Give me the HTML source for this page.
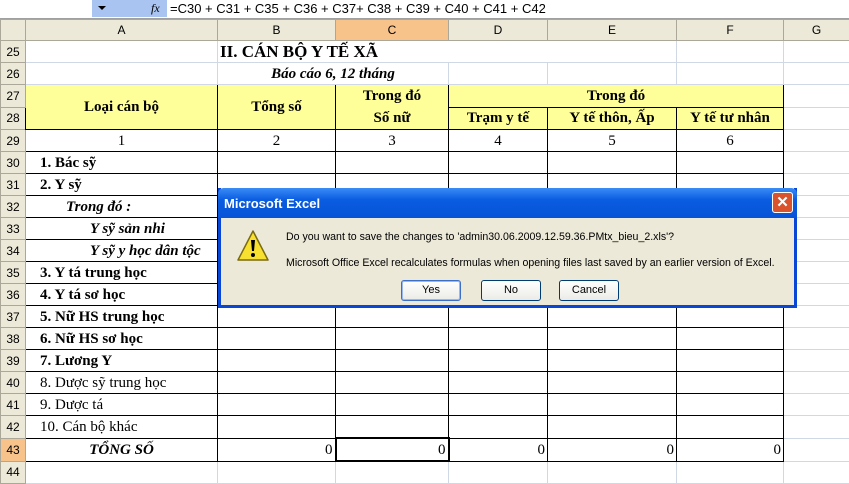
<!DOCTYPE html>
<html><head><meta charset="utf-8"><style>
body{margin:0;width:849px;height:482px;overflow:hidden;background:#fff;position:relative;font-family:"Liberation Serif",serif}
#fb{position:absolute;left:0;top:0;width:849px;height:18px;background:#fff;border-bottom:1px solid #a0a0a0}
#nb{position:absolute;left:0;top:0;width:92px;height:17px;background:#fff}
#nbd{position:absolute;left:92px;top:0;width:75px;height:17px;background:#a9c4f0}
#fx{position:absolute;left:170px;top:1px;font:13px "Liberation Sans",sans-serif;color:#000;white-space:pre}
table{position:absolute;left:0;top:19px;border-collapse:collapse;table-layout:fixed;width:849px}
td{padding:0;height:21px;border:1px solid #d0d7e5;font-size:15px;white-space:nowrap;overflow:hidden;line-height:20px}
td.h{background:#ece9d8;font:12px "Liberation Sans",sans-serif;text-align:center;color:#000;border-color:#aca899}
tr.ch td{height:20px;background:#ece9d8;font:12px "Liberation Sans",sans-serif;text-align:center;border-color:#aca899}
.b{border:1px solid #000}
.y{background:#ffff99;font-weight:bold;text-align:center}
.c{text-align:center}
.r{text-align:right;padding-right:2px}
.bd{font-weight:bold}
.bi{font-weight:bold;font-style:italic}
#dlg{position:absolute;left:218px;top:188px;width:573px;height:117px;background:#ece9d8;border:3px solid #0847d6;border-top:0}
#tb{position:absolute;left:-3px;top:0;width:579px;height:30px;background:linear-gradient(#3a8cf6,#0a5ce0 40%,#0753d8);color:#fff;font:bold 13px "Liberation Sans",sans-serif;border-radius:6px 6px 0 0}
#tb span{position:absolute;left:6px;top:8px}
#cl{position:absolute;right:4px;top:4px;width:19px;height:19px;background:#d9532d;border:1px solid #fff;border-radius:3px;color:#fff;font:bold 15px "Liberation Sans",sans-serif;text-align:center;line-height:19px}
.t{position:absolute;font:10.6px "Liberation Sans",sans-serif;color:#000;white-space:nowrap}
.btn{position:absolute;top:92px;width:58px;height:19px;border:1px solid #003c74;border-radius:3px;background:linear-gradient(#fff,#ecebe6);font:11px "Liberation Sans",sans-serif;text-align:center;line-height:19px}
</style></head><body>
<div id="fb"><div id="nb"></div><div id="nbd"><span style="position:absolute;left:6px;top:6px;width:0;height:0;border-left:4px solid transparent;border-right:4px solid transparent;border-top:4px solid #000"></span><i style="position:absolute;left:59px;top:1px;font:italic 12px 'Liberation Serif',serif">fx</i></div><div id="fx">=C30 + C31 + C35 + C36 + C37+ C38 + C39 + C40 + C41 + C42</div></div>
<table>
<colgroup><col style="width:25px"><col style="width:192px"><col style="width:118px"><col style="width:113px"><col style="width:99px"><col style="width:129px"><col style="width:107px"><col style="width:66px"></colgroup>
<tr class="ch"><td></td><td>A</td><td>B</td><td style="background:#f8c38a">C</td><td>D</td><td>E</td><td>F</td><td>G</td></tr>
<tr><td class="h">25</td><td></td><td colspan="3" style="font-weight:bold;font-size:17px;border-right-color:#fff;text-indent:2px">II. CÁN BỘ Y TẾ XÃ</td><td></td><td></td><td></td></tr>
<tr><td class="h">26</td><td></td><td colspan="2" class="bi c">Báo cáo 6, 12 tháng</td><td></td><td></td><td></td><td></td></tr>
<tr><td class="h">27</td><td rowspan="2" class="b y">Loại cán bộ</td><td rowspan="2" class="b y">Tổng số</td><td rowspan="2" class="b y" style="line-height:22px">Trong đó<br>Số nữ</td><td colspan="3" class="b y">Trong đó</td><td></td></tr>
<tr><td class="h">28</td><td class="b y">Trạm y tế</td><td class="b y">Y tế thôn, Ấp</td><td class="b y">Y tế tư nhân</td><td></td></tr>
<tr><td class="h">29</td><td class="b c">1</td><td class="b c">2</td><td class="b c">3</td><td class="b c">4</td><td class="b c">5</td><td class="b c">6</td><td></td></tr>
<tr><td class="h">30</td><td class="b bd" style="text-indent:14px">1. Bác sỹ</td><td class="b"></td><td class="b"></td><td class="b"></td><td class="b"></td><td class="b"></td><td></td></tr>
<tr><td class="h">31</td><td class="b bd" style="text-indent:14px">2. Y sỹ</td><td class="b"></td><td class="b"></td><td class="b"></td><td class="b"></td><td class="b"></td><td></td></tr>
<tr><td class="h">32</td><td class="b bi" style="text-indent:40px">Trong đó :</td><td class="b"></td><td class="b"></td><td class="b"></td><td class="b"></td><td class="b"></td><td></td></tr>
<tr><td class="h">33</td><td class="b bi" style="text-indent:64px">Y sỹ sản nhi</td><td class="b"></td><td class="b"></td><td class="b"></td><td class="b"></td><td class="b"></td><td></td></tr>
<tr><td class="h">34</td><td class="b bi" style="text-indent:64px">Y sỹ y học dân tộc</td><td class="b"></td><td class="b"></td><td class="b"></td><td class="b"></td><td class="b"></td><td></td></tr>
<tr><td class="h">35</td><td class="b bd" style="text-indent:14px">3. Y tá trung học</td><td class="b"></td><td class="b"></td><td class="b"></td><td class="b"></td><td class="b"></td><td></td></tr>
<tr><td class="h">36</td><td class="b bd" style="text-indent:14px">4. Y tá sơ học</td><td class="b"></td><td class="b"></td><td class="b"></td><td class="b"></td><td class="b"></td><td></td></tr>
<tr><td class="h">37</td><td class="b bd" style="text-indent:14px">5. Nữ HS trung học</td><td class="b"></td><td class="b"></td><td class="b"></td><td class="b"></td><td class="b"></td><td></td></tr>
<tr><td class="h">38</td><td class="b bd" style="text-indent:14px">6. Nữ HS sơ học</td><td class="b"></td><td class="b"></td><td class="b"></td><td class="b"></td><td class="b"></td><td></td></tr>
<tr><td class="h">39</td><td class="b bd" style="text-indent:14px">7. Lương Y</td><td class="b"></td><td class="b"></td><td class="b"></td><td class="b"></td><td class="b"></td><td></td></tr>
<tr><td class="h">40</td><td class="b" style="text-indent:14px">8. Dược sỹ trung học</td><td class="b"></td><td class="b"></td><td class="b"></td><td class="b"></td><td class="b"></td><td></td></tr>
<tr><td class="h">41</td><td class="b" style="text-indent:14px">9. Dược tá</td><td class="b"></td><td class="b"></td><td class="b"></td><td class="b"></td><td class="b"></td><td></td></tr>
<tr><td class="h">42</td><td class="b" style="text-indent:14px">10. Cán bộ khác</td><td class="b"></td><td class="b"></td><td class="b"></td><td class="b"></td><td class="b"></td><td></td></tr>
<tr><td class="h" style="background:#f8c38a">43</td><td class="b bi c">TỔNG SỐ</td><td class="b r">0</td><td class="b r" style="border:2px solid #000">0</td><td class="b r">0</td><td class="b r">0</td><td class="b r">0</td><td></td></tr>
<tr><td class="h">44</td><td></td><td></td><td></td><td></td><td></td><td></td><td></td></tr>
</table>
<div id="dlg">
<div id="tb"><span>Microsoft Excel</span><div id="cl">✕</div></div>
<svg style="position:absolute;left:15px;top:41px" width="34" height="34" viewBox="0 0 34 34"><path d="M17 2 L32 31 H2 Z" fill="#f8e030" stroke="#7a6a10" stroke-width="1.5" stroke-linejoin="round"/><path d="M15 11 h4 l-1 11 h-2 z" fill="#000"/><circle cx="17" cy="26" r="2" fill="#000"/></svg>
<div class="t" style="left:65px;top:43px">Do you want to save the changes to 'admin30.06.2009.12.59.36.PMtx_bieu_2.xls'?</div>
<div class="t" style="left:65px;top:69px">Microsoft Office Excel recalculates formulas when opening files last saved by an earlier version of Excel.</div>
<div class="btn" style="left:180px;border-color:#3c6fc8;box-shadow:inset 0 0 0 1px #9ab8ee">Yes</div>
<div class="btn" style="left:260px">No</div>
<div class="btn" style="left:338px">Cancel</div>
</div>
</body></html>
